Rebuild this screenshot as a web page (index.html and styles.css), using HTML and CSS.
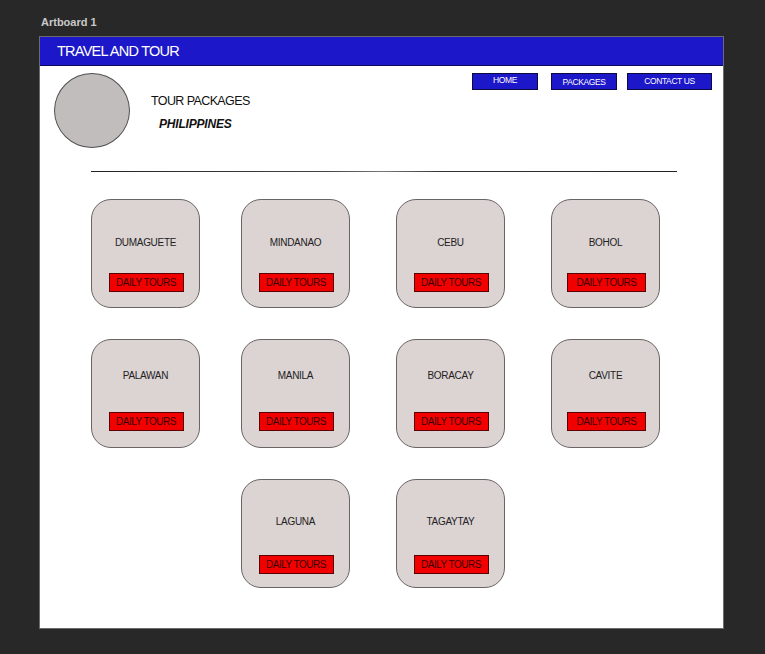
FILE: index.html
```html
<!DOCTYPE html>
<html>
<head>
<meta charset="utf-8">
<title>Travel and Tour</title>
<link rel="stylesheet" href="styles.css">
</head>
<body>
<div class="board-label">Artboard 1</div>
<div class="artboard">
  <header class="topbar">TRAVEL AND TOUR</header>
  <section class="intro">
    <div class="avatar"></div>
    <div class="titles">
      <div class="title">TOUR PACKAGES</div>
      <div class="subtitle">PHILIPPINES</div>
    </div>
    <nav class="nav">
      <a class="nav-btn nav-home">HOME</a>
      <a class="nav-btn nav-packages">PACKAGES</a>
      <a class="nav-btn nav-contact">CONTACT US</a>
    </nav>
  </section>
  <div class="rule"></div>
  <main class="grid">
    <div class="card r1"><div class="name">DUMAGUETE</div><div class="btn">DAILY TOURS</div></div>
    <div class="card r1"><div class="name">MINDANAO</div><div class="btn">DAILY TOURS</div></div>
    <div class="card r1"><div class="name">CEBU</div><div class="btn">DAILY TOURS</div></div>
    <div class="card r1 wide"><div class="name">BOHOL</div><div class="btn">DAILY TOURS</div></div>
    <div class="card r2"><div class="name">PALAWAN</div><div class="btn">DAILY TOURS</div></div>
    <div class="card r2"><div class="name">MANILA</div><div class="btn">DAILY TOURS</div></div>
    <div class="card r2"><div class="name">BORACAY</div><div class="btn">DAILY TOURS</div></div>
    <div class="card r2 wide"><div class="name">CAVITE</div><div class="btn">DAILY TOURS</div></div>
    <div class="card r3 col2"><div class="name">LAGUNA</div><div class="btn">DAILY TOURS</div></div>
    <div class="card r3"><div class="name">TAGAYTAY</div><div class="btn">DAILY TOURS</div></div>
  </main>
</div>
</body>
</html>
```

FILE: styles.css
```css
* { box-sizing: border-box; }
html, body { margin: 0; padding: 0; }
body {
  background: #282828;
  width: 765px;
  height: 654px;
  overflow: hidden;
  font-family: "Liberation Sans", Arial, sans-serif;
}
.board-label {
  color: #c9c9c9;
  font-weight: bold;
  font-size: 11px;
  padding: 16px 0 0 41px;
  height: 36px;
  line-height: 13px;
}
.artboard {
  margin-left: 39px;
  width: 685px;
  height: 593px;
  background: #ffffff;
  border: 1px solid #6b6b6b;
}
.topbar {
  height: 29px;
  background: #1c17c9;
  border-bottom: 1px solid #0c0a5a;
  color: #ffffff;
  font-size: 14.5px;
  letter-spacing: -0.75px;
  padding-left: 17px;
  line-height: 29px;
}
.intro {
  display: flex;
  height: 105px;
  padding: 7px 11px 0 14px;
}
.avatar {
  width: 76px;
  height: 75px;
  border-radius: 50%;
  background: #c1bdbd;
  border: 1px solid #505050;
  flex: none;
}
.titles {
  margin-left: 21px;
  padding-top: 20px;
}
.title {
  font-size: 12.5px;
  color: #111;
  letter-spacing: -0.6px;
  line-height: 16px;
}
.subtitle {
  font-size: 12px;
  font-weight: bold;
  font-style: italic;
  color: #111;
  margin: 7px 0 0 8px;
  line-height: 16px;
  letter-spacing: -0.2px;
}
.nav {
  margin-left: auto;
  display: flex;
  align-items: flex-start;
}
.nav-btn {
  display: block;
  height: 17px;
  background: #1c17c9;
  border: 1px solid #0c0a40;
  color: #fff;
  font-size: 8.5px;
  letter-spacing: -0.4px;
  text-align: center;
}
.nav-home { width: 66px; line-height: 12px; }
.nav-packages { width: 66px; margin-left: 13px; line-height: 16px; }
.nav-contact { width: 85px; margin-left: 10px; line-height: 14px; }
.rule {
  margin-left: 51px;
  width: 586px;
  height: 1px;
  background: linear-gradient(90deg, #222 0%, #444 40%, #777 50%, #333 60%, #222 100%);
}
.grid {
  display: grid;
  grid-template-columns: 150px 155px 155px 109px;
  grid-auto-rows: 109px;
  row-gap: 31px;
  margin: 27px 0 0 51px;
}
.card {
  width: 109px;
  height: 109px;
  background: #dcd3d3;
  border: 1px solid #6a6565;
  border-radius: 20px;
  display: flex;
  flex-direction: column;
  align-items: center;
}
.card .name {
  font-size: 10px;
  color: #222;
  letter-spacing: -0.3px;
  line-height: 12px;
  margin-top: 37px;
  height: 12px;
}
.card .btn {
  width: 75px;
  height: 19px;
  margin-top: 24px;
  margin-left: 1px;
  background: #f20000;
  border: 1px solid #5a0000;
  color: #3a0000;
  font-size: 10px;
  letter-spacing: -0.5px;
  text-align: center;
  line-height: 17px;
}
.card.wide .btn { width: 79px; margin-left: 15px; align-self: flex-start; }
.card.r2 .name { margin-top: 30px; }
.card.r2 .btn { margin-top: 30px; }
.card.r3 .name { margin-top: 36px; }
.card.r3 .btn { margin-top: 27px; }
.card.col2 { grid-column: 2; }
```
